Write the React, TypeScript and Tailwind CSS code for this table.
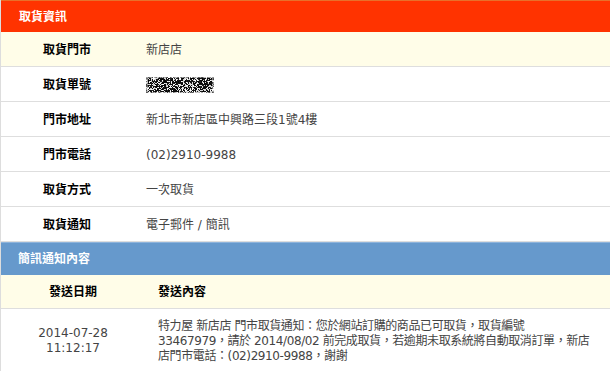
import * as React from "react";

const font = { fontFamily: '"DejaVu Sans", "Noto Sans CJK TC", sans-serif' };

const rows = [
  { label: "取貨門市", value: "新店店", cream: true },
  { label: "取貨單號", value: "", cream: false },
  { label: "門市地址", value: "新北市新店區中興路三段1號4樓", cream: false },
  { label: "門市電話", value: "(02)2910-9988", cream: false },
  { label: "取貨方式", value: "一次取貨", cream: false },
  { label: "取貨通知", value: "電子郵件 / 簡訊", cream: false },
];

// pixelated blur that hides the order number
const Masked = () => {
  const cells: React.ReactNode[] = [];
  let seed = 7;
  const rand = () => {
    seed = (seed * 9301 + 49297) % 233280;
    return seed / 233280;
  };
  for (let y = 0; y < 16; y += 1) {
    for (let x = 0; x < 68; x += 1) {
      const edge = x < 2 || x > 65 || y === 0 || y === 15;
      const r = rand();
      const v = edge ? 60 + r * 200 : r < 0.6 ? r * 60 : 120 + r * 130;
      if (v > 235) continue;
      const c = Math.round(v);
      cells.push(
        <rect key={`${x}-${y}`} x={x} y={y} width="1" height="1" fill={`rgb(${c},${c},${c})`} />
      );
    }
  }
  return (
    <svg width="68" height="16" viewBox="0 0 68 16" shapeRendering="crispEdges">
      {cells}
    </svg>
  );
};

export default function App() {
  return (
    <div className="w-[610px] h-[371px] overflow-hidden bg-white text-[12px] text-[#333]" style={font}>
      <div className="border-l border-[#dddddd]">
        <div className="h-[32px] bg-[#ff3300] border-t border-[#e8702a] flex items-center pl-[18px] text-white font-bold">
          取貨資訊
        </div>
        {rows.map((r) => (
          <div
            key={r.label}
            className={`h-[35px] flex items-center border-b border-[#dedede] ${r.cream ? "bg-[#fffde8]" : "bg-white"}`}
          >
            <div className="w-[132px] text-center font-bold text-black pt-[1px]">{r.label}</div>
            <div className="pl-[13px] text-[#444] pt-[1px]">
              {r.label === "取貨單號" ? <Masked /> : r.value}
            </div>
          </div>
        ))}
        <div className="h-[33px] bg-[#6699cc] border-t border-[#8db3db] flex items-center pl-[17px] text-white font-bold">
          簡訊通知內容
        </div>
        <div className="h-[34px] flex items-center bg-[#fffde8] border-b border-[#dedede]">
          <div className="w-[144px] text-center font-bold text-black">發送日期</div>
          <div className="pl-[13px] font-bold text-black">發送內容</div>
        </div>
        <div className="h-[70px] flex items-start pt-[10px] bg-white">
          <div className="w-[144px] text-center leading-[15px] pt-[7px] text-[#444]">
            2014-07-28
            <br />
            11:12:17
          </div>
          <div className="pl-[13px] leading-[15px] whitespace-nowrap text-[#444] tracking-[-0.4px]">
            特力屋 新店店 門市取貨通知：您於網站訂購的商品已可取貨，取貨編號
            <br />
            33467979，請於 2014/08/02 前完成取貨，若逾期未取系統將自動取消訂單，新店
            <br />
            店門市電話：(02)2910-9988，謝謝
          </div>
        </div>
      </div>
    </div>
  );
}
